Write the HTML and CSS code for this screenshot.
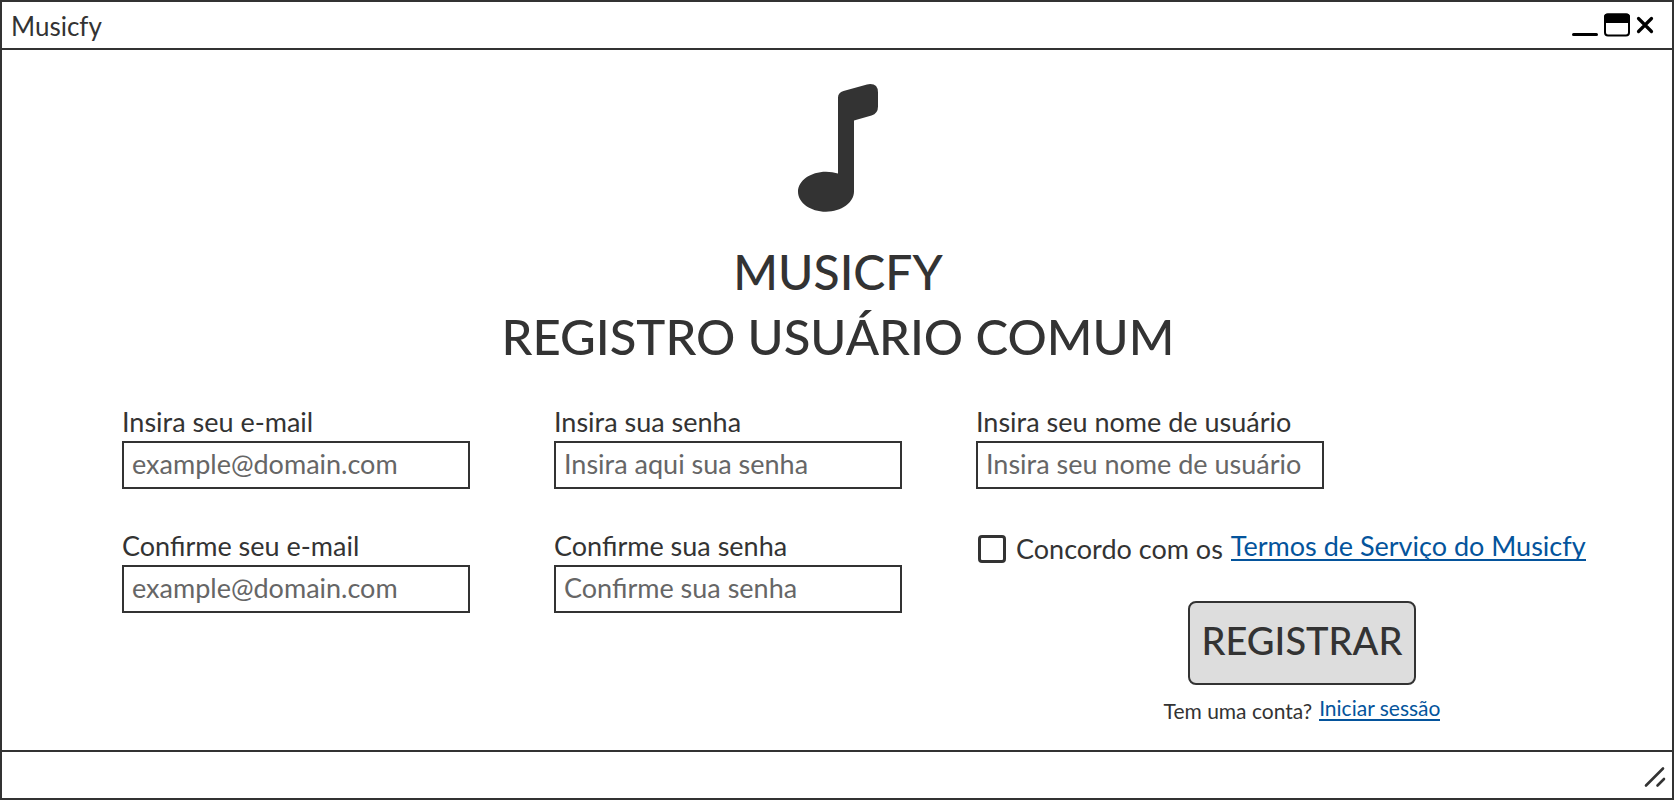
FILE: index.html
```html
<!DOCTYPE html>
<html lang="pt-BR">
<head>
<meta charset="utf-8">
<meta name="viewport" content="width=device-width, initial-scale=1">
<title>Musicfy</title>
<link rel="stylesheet" href="styles.css">
</head>
<body>
<div class="window">
  <header class="titlebar">
    <span class="titlebar-name">Musicfy</span>
    <div class="controls">
      <button class="control" type="button" aria-label="Minimizar">
        <svg width="26" height="24" viewBox="0 0 26 24"><path d="M1.5 21.5H24.5" stroke="#000" stroke-width="3" stroke-linecap="round"/></svg>
      </button>
      <button class="control" type="button" aria-label="Maximizar">
        <svg width="26" height="24" viewBox="0 0 26 24"><rect x="1" y="1.5" width="24" height="21" rx="3" fill="#fff" stroke="#000" stroke-width="2"/><path d="M0 10V4Q0 .5 3.500 .5H22.500Q26 .5 26 4V10Z"/></svg>
      </button>
      <button class="control" type="button" aria-label="Fechar">
        <svg width="18" height="24" viewBox="0 0 18 24"><path d="M2.500 5.500L15.500 18.500M15.500 5.500L2.500 18.500" stroke="#000" stroke-width="3.200" stroke-linecap="round"/></svg>
      </button>
    </div>
  </header>

  <main class="content">
    <div class="hero">
      <svg class="note" width="80" height="128" viewBox="0 0 80 128" aria-hidden="true"><path fill="#333" d="M40 13.500Q40 8.500 45.500 7L69 .4Q80-1.500 80 8.500V22.500Q80 29.500 73.500 31.500L56 36.600V107.500C56 118.500 43.500 127.700 28 127.700S0 118.800 0 107.700S12.500 87.700 28 87.700Q34.500 87.700 40 89.500Z"/></svg>
      <h1 class="brand">MUSICFY</h1>
      <h2 class="subtitle">REGISTRO USUÁRIO COMUM</h2>
    </div>

    <form class="form">
      <div class="field">
        <label for="email">Insira seu e-mail</label>
        <input class="textbox" id="email" type="email" placeholder="example@domain.com">
      </div>
      <div class="field">
        <label for="senha">Insira sua senha</label>
        <input class="textbox" id="senha" type="password" placeholder="Insira aqui sua senha">
      </div>
      <div class="field">
        <label for="usuario">Insira seu nome de usuário</label>
        <input class="textbox" id="usuario" type="text" placeholder="Insira seu nome de usuário">
      </div>
      <div class="field">
        <label for="email2">Confirme seu e-mail</label>
        <input class="textbox" id="email2" type="email" placeholder="example@domain.com">
      </div>
      <div class="field">
        <label for="senha2">Confirme sua senha</label>
        <input class="textbox" id="senha2" type="password" placeholder="Confirme sua senha">
      </div>
      <div class="finish">
        <div class="terms">
          <input class="checkbox" id="termos" type="checkbox">
          <label class="terms-label" for="termos">Concordo com os</label>
          <a class="link" href="#termos-de-servico">Termos de Serviço do Musicfy</a>
        </div>
        <div class="actions">
          <button class="submit" type="submit">REGISTRAR</button>
          <p class="login"><span>Tem uma conta?</span> <a class="link" href="#iniciar-sessao">Iniciar sessão</a></p>
        </div>
      </div>
    </form>
  </main>

  <footer class="statusbar">
    <svg width="22" height="22" viewBox="0 0 22 22" aria-hidden="true"><path d="M2 19.500L19 2.500M13.500 19.500L20 13" stroke="#333" stroke-width="2.600" stroke-linecap="round"/></svg>
  </footer>
</div>
</body>
</html>
```
FILE: styles.css
```css
* {
  box-sizing: border-box;
}

body {
  margin: 0;
  background: #fff;
  color: #333;
  font-family: Lato, "Open Sans", sans-serif;
  font-size: 27px;
  line-height: 32px;
}

.window {
  display: flex;
  flex-direction: column;
  min-height: 100vh;
  border: 2px solid #333;
}

.titlebar {
  display: flex;
  align-items: center;
  justify-content: space-between;
  height: 48px;
  padding: 0 18px 0 9px;
  border-bottom: 2px solid #333;
}

.titlebar-name {
  padding-top: 2px;
  font-size: 26px;
}

.controls {
  display: flex;
  align-items: center;
  gap: 6px;
}

.control {
  display: flex;
  padding: 0;
  border: 0;
  background: none;
}

.content {
  flex: 1;
  padding: 34px 88px 16px 120px;
}

.hero {
  padding-right: 30px;
  text-align: center;
}

.note {
  display: block;
  margin: 0 auto 28px;
}

.brand,
.subtitle {
  margin: 0;
  font-size: 48px;
  font-weight: 500;
  line-height: 64px;
}

.subtitle {
  font-size: 49px;
}

.form {
  display: grid;
  grid-template-columns: minmax(0, 432fr) minmax(0, 422fr) minmax(0, 608fr);
  row-gap: 41px;
  margin-top: 38px;
}

.field {
  display: flex;
  flex-direction: column;
  gap: 3px;
  max-width: 348px;
}

.textbox {
  width: 100%;
  height: 48px;
  margin: 0;
  padding: 0 8px 4px;
  border: 2px solid #333;
  border-radius: 0;
  background: #fff;
  color: #333;
  font: inherit;
}

.textbox::placeholder {
  color: #666;
  opacity: 1;
}

.finish {
  padding-top: 3px;
}

.terms {
  display: flex;
  align-items: center;
  white-space: nowrap;
}

.checkbox {
  appearance: none;
  flex: none;
  width: 28px;
  height: 28px;
  margin: 0 10px 0 2px;
  border: 3px solid #333;
  border-radius: 4px;
  background: #fff;
}

.checkbox:checked {
  background: #333;
}

.terms-label {
  margin-right: 8px;
}

.link {
  margin-bottom: 4px;
  border-bottom: 2px solid #04549c;
  color: #04549c;
  line-height: 26px;
  text-decoration: none;
}

.actions {
  display: flex;
  flex-direction: column;
  align-items: center;
  gap: 12px;
  padding: 36px 0 0 44px;
}

.submit {
  width: 228px;
  height: 84px;
  padding: 0 0 6px;
  border: 2px solid #333;
  border-radius: 8px;
  background: #ddd;
  color: #333;
  font-family: inherit;
  font-size: 38px;
  font-weight: 500;
}

.login {
  display: flex;
  gap: 7px;
  margin: 0;
  font-size: 21px;
  line-height: 28px;
}

.login .link {
  line-height: 22px;
}

.statusbar {
  display: flex;
  align-items: center;
  justify-content: flex-end;
  height: 48px;
  padding: 4px 6px 0;
  border-top: 2px solid #333;
}
```
